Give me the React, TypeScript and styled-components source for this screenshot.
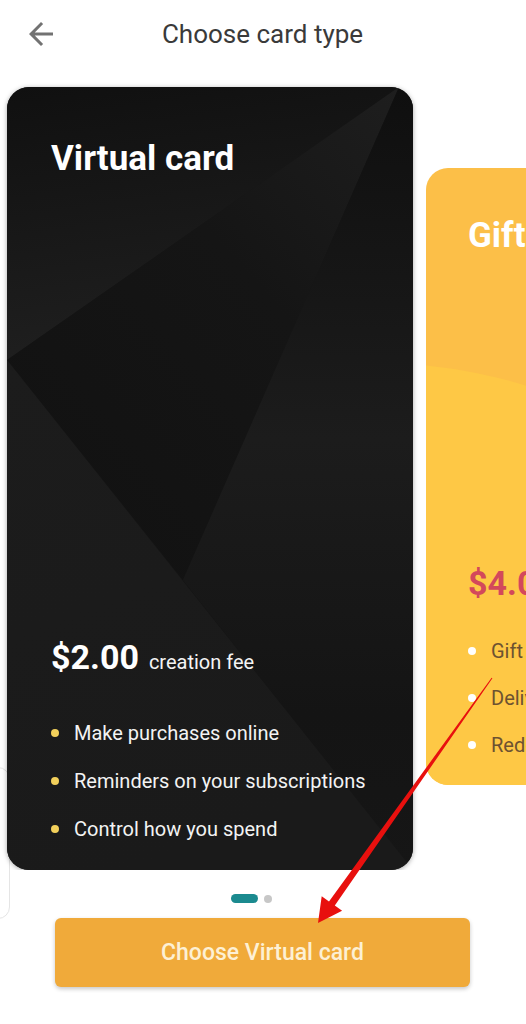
import React from "react";
import styled, { createGlobalStyle } from "styled-components";

const GlobalStyle = createGlobalStyle`
  html, body { margin: 0; padding: 0; background: #ffffff; }
  body {
    font-family: Roboto, "Noto Sans", "Liberation Sans", Arial, sans-serif;
    -webkit-font-smoothing: antialiased;
  }
  * { box-sizing: border-box; }
`;

const Page = styled.div`
  position: relative;
  width: 526px;
  height: 1024px;
  overflow: hidden;
  background: #ffffff;
  display: flex;
  flex-direction: column;
`;

const Header = styled.header`
  height: 70px;
  display: grid;
  grid-template-columns: 1fr auto 1fr;
  align-items: center;
  padding: 0 0 2px 23px;
`;

const BackButton = styled.button`
  width: 36px;
  height: 36px;
  padding: 0;
  border: 0;
  background: transparent;
  display: flex;
  align-items: center;
  justify-content: center;
  justify-self: start;
  color: #727272;
`;

const Title = styled.h1`
  margin: 0;
  font-size: 26px;
  font-weight: 400;
  color: #3a3a3a;
  transform: translateX(-12px);
`;

const Carousel = styled.section`
  display: flex;
  align-items: flex-start;
  gap: 13px;
  padding: 17px 0 0 7px;
  overflow: hidden;
`;

type Tone = "dark" | "gold";

const Card = styled.article<{
  $tone: Tone;
  $width: number;
  $height: number;
  $offset: number;
  $padTop: number;
  $padLeft: number;
}>`
  position: relative;
  z-index: 1;
  flex: 0 0 auto;
  width: ${(p) => p.$width}px;
  height: ${(p) => p.$height}px;
  margin-top: ${(p) => p.$offset}px;
  border-radius: 22px;
  overflow: hidden;
  background: ${(p) => (p.$tone === "dark" ? "#141414" : "#fcbf48")};
  box-shadow: ${(p) =>
    p.$tone === "dark" ? "0 1px 5px rgba(0,0,0,0.35)" : "none"};
  display: flex;
  flex-direction: column;
  padding: ${(p) => p.$padTop}px 16px 17px ${(p) => p.$padLeft}px;
`;

const Decor = styled.svg`
  position: absolute;
  inset: 0;
  width: 100%;
  height: 100%;
  z-index: 0;
`;

const CardTitle = styled.h2`
  position: relative;
  z-index: 1;
  margin: 0;
  font-size: 35px;
  line-height: 40px;
  font-weight: 700;
  color: #ffffff;
  white-space: nowrap;
`;

const PriceRow = styled.div<{ $gap: number }>`
  position: relative;
  z-index: 1;
  margin-top: auto;
  margin-bottom: ${(p) => p.$gap}px;
  display: flex;
  align-items: baseline;
  gap: 10px;
  line-height: 40px;
  white-space: nowrap;
`;

const Amount = styled.span<{ $tone: Tone }>`
  font-size: 34px;
  font-weight: 700;
  color: ${(p) => (p.$tone === "dark" ? "#ffffff" : "#d3485b")};
`;

const Fee = styled.span<{ $tone: Tone }>`
  font-size: 20px;
  font-weight: 400;
  color: ${(p) => (p.$tone === "dark" ? "#f4f4f4" : "#6d5433")};
`;

const FeatureList = styled.ul`
  position: relative;
  z-index: 1;
  margin: 0;
  padding: 0;
  list-style: none;
`;

const Feature = styled.li<{ $tone: Tone; $row: number }>`
  display: flex;
  align-items: center;
  gap: 15px;
  height: ${(p) => p.$row}px;
  font-size: 20px;
  white-space: nowrap;
  color: ${(p) => (p.$tone === "dark" ? "#f3f3f3" : "#6d5231")};

  &::before {
    content: "";
    flex: 0 0 auto;
    width: 8px;
    height: 8px;
    border-radius: 50%;
    background: ${(p) => (p.$tone === "dark" ? "#f2d05b" : "#ffffff")};
  }
`;

const Pager = styled.div`
  display: flex;
  justify-content: center;
  align-items: center;
  gap: 6px;
  margin: 24px 0 0 -23px;
  height: 9px;
`;

const PagerDot = styled.span<{ $active?: boolean }>`
  width: ${(p) => (p.$active ? 27 : 8)}px;
  height: ${(p) => (p.$active ? 9 : 8)}px;
  border-radius: 5px;
  background: ${(p) => (p.$active ? "#1b8a8f" : "#c7c7c7")};
`;

const PrimaryButton = styled.button`
  margin: 15px 0 0 55px;
  width: 415px;
  height: 69px;
  border: 0;
  border-radius: 6px;
  background: #f0aa3a;
  box-shadow: 0 2px 4px rgba(0, 0, 0, 0.22);
  font-family: Roboto, "Noto Sans", Arial, sans-serif;
  font-size: 23px;
  font-weight: 500;
  color: #fdf0d4;
`;

const SideTab = styled.div`
  position: absolute;
  left: -30px;
  top: 767px;
  width: 40px;
  height: 152px;
  border: 1.5px solid #e5e5e5;
  border-radius: 12px;
  background: #ffffff;
  z-index: 0;
`;

const Annotation = styled.svg`
  position: absolute;
  left: 0;
  top: 0;
  width: 526px;
  height: 1024px;
  pointer-events: none;
  z-index: 5;
`;

const DarkDecor = () => (
  <Decor viewBox="0 0 406 783" preserveAspectRatio="none" aria-hidden>
    <defs>
      <linearGradient id="gU" x1="0" y1="0" x2="0.2" y2="1">
        <stop offset="0" stopColor="#101010" />
        <stop offset="1" stopColor="#1f1f1f" />
      </linearGradient>
      <linearGradient id="gD" x1="1" y1="0" x2="0.2" y2="0.9">
        <stop offset="0" stopColor="#1e1e1e" />
        <stop offset="0.45" stopColor="#151515" />
        <stop offset="1" stopColor="#121212" />
      </linearGradient>
      <linearGradient id="gR" x1="0" y1="0" x2="0" y2="1">
        <stop offset="0" stopColor="#0f0f0f" />
        <stop offset="0.45" stopColor="#1c1c1c" />
        <stop offset="0.8" stopColor="#141414" />
        <stop offset="1" stopColor="#161616" />
      </linearGradient>
      <linearGradient id="gB" x1="0" y1="0" x2="0.3" y2="1">
        <stop offset="0" stopColor="#1c1c1c" />
        <stop offset="1" stopColor="#1a1a1a" />
      </linearGradient>
    </defs>
    <polygon points="0,0 392,0 0,273" fill="url(#gU)" />
    <polygon points="392,0 0,273 176,493" fill="url(#gD)" />
    <polygon points="392,0 406,0 406,783 176,493" fill="url(#gR)" />
    <polygon points="0,273 406,783 0,783" fill="url(#gB)" />
  </Decor>
);

const GoldDecor = () => (
  <Decor viewBox="0 0 320 617" preserveAspectRatio="none" aria-hidden>
    <circle cx="-50" cy="700" r="505" fill="#fec845" />
  </Decor>
);

const ArrowLeftIcon = () => (
  <svg width="36" height="36" viewBox="0 0 24 24" aria-hidden>
    <path
      d="M20 11H7.83l5.59-5.59L12 4l-8 8 8 8 1.41-1.41L7.83 13H20v-2z"
      fill="currentColor"
    />
  </svg>
);

const cards = [
  {
    tone: "dark" as Tone,
    title: "Virtual card",
    amount: "$2.00",
    fee: "creation fee",
    features: [
      "Make purchases online",
      "Reminders on your subscriptions",
      "Control how you spend",
    ],
    width: 406,
    height: 783,
    offset: 0,
    padTop: 52,
    padLeft: 44,
    gap: 27,
    row: 48,
  },
  {
    tone: "gold" as Tone,
    title: "Gift card",
    amount: "$4.00",
    fee: "creation fee",
    features: ["Gift a card", "Delivered by email", "Redeem anywhere"],
    width: 320,
    height: 617,
    offset: 81,
    padTop: 48,
    padLeft: 42,
    gap: 19,
    row: 47,
  },
];

export default function App() {
  return (
    <>
      <GlobalStyle />
      <Page>
        <SideTab />
        <Header>
          <BackButton aria-label="Back">
            <ArrowLeftIcon />
          </BackButton>
          <Title>Choose card type</Title>
          <span />
        </Header>
        <Carousel>
          {cards.map((c) => (
            <Card
              key={c.title}
              $tone={c.tone}
              $width={c.width}
              $height={c.height}
              $offset={c.offset}
              $padTop={c.padTop}
              $padLeft={c.padLeft}
            >
              {c.tone === "dark" ? <DarkDecor /> : <GoldDecor />}
              <CardTitle>{c.title}</CardTitle>
              <PriceRow $gap={c.gap}>
                <Amount $tone={c.tone}>{c.amount}</Amount>
                <Fee $tone={c.tone}>{c.fee}</Fee>
              </PriceRow>
              <FeatureList>
                {c.features.map((f) => (
                  <Feature key={f} $tone={c.tone} $row={c.row}>
                    {f}
                  </Feature>
                ))}
              </FeatureList>
            </Card>
          ))}
        </Carousel>
        <Pager>
          <PagerDot $active />
          <PagerDot />
        </Pager>
        <PrimaryButton>Choose Virtual card</PrimaryButton>
        <Annotation viewBox="0 0 526 1024" aria-hidden>
          <polygon
            points="492.4,678.3 334.8,905.4 342.1,910.7 318,923 321.7,896.2 329,901.4 491.6,677.7"
            fill="#e8100e"
          />
        </Annotation>
      </Page>
    </>
  );
}
